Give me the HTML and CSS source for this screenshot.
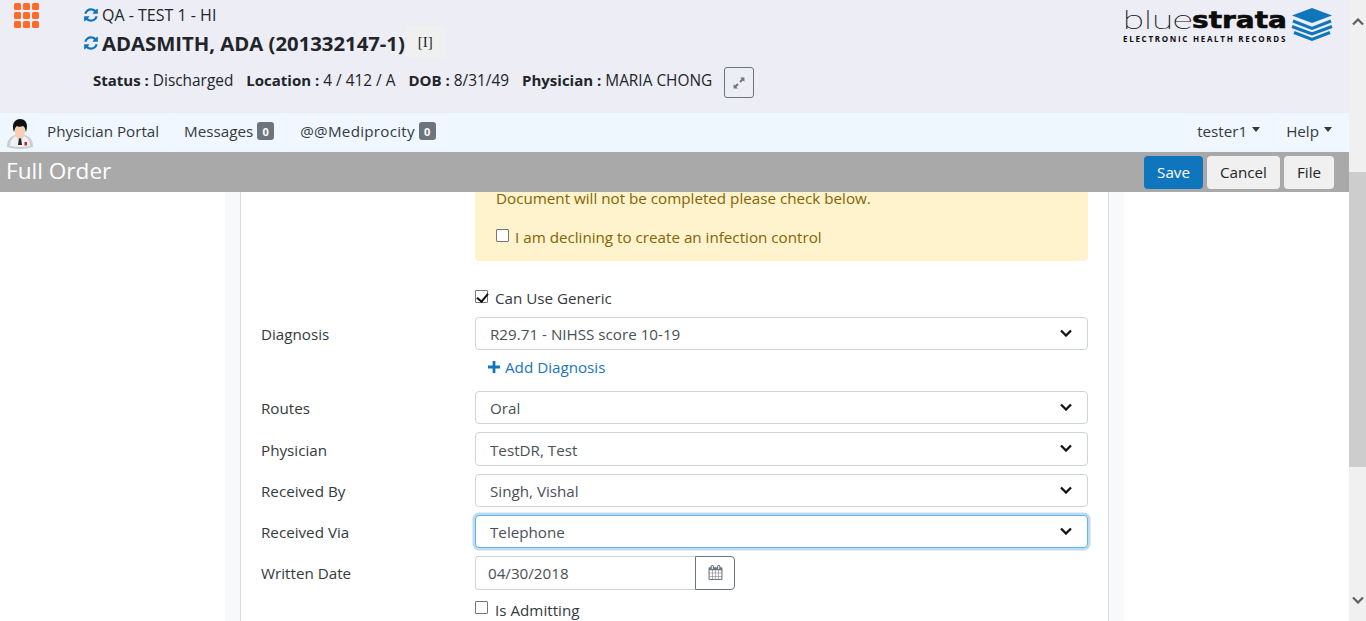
FILE: index.html
```html
<!doctype html>
<html lang="en">
<head>
    <meta charset="utf-8">
    <title>Full Order</title>
    <link rel="stylesheet" href="styles.css">
</head>
<body>
<div class="page">
    <div class="main">
        <header class="header">
            <div class="apps">
                <i></i><i></i><i></i><i></i><i></i><i></i><i></i><i></i><i></i>
            </div>
            <div class="patient">
                <div class="facility">
                    <svg class="refresh" viewBox="0 0 1792 1792"><path d="M1639 1056q0 5-1 7-64 268-268 434.5t-478 166.5q-146 0-282.5-55t-243.5-157l-129 129q-19 19-45 19t-45-19-19-45v-448q0-26 19-45t45-19h448q26 0 45 19t19 45-19 45l-137 137q71 66 161 102t187 36q134 0 250-65t186-179q11-17 53-117 8-23 30-23h192q13 0 22.5 9.5t9.5 22.5zm25-800v448q0 26-19 45t-45 19h-448q-26 0-45-19t-19-45 19-45l138-138q-148-137-349-137-134 0-250 65t-186 179q-11 17-53 117-8 23-30 23h-199q-13 0-22.5-9.5t-9.5-22.5v-7q65-268 270-434.5t480-166.5q146 0 284 55.5t245 156.5l130-129q19-19 45-19t45 19 19 45z"/></svg>
                    QA - TEST 1 - HI
                </div>
                <div class="name-row">
                    <svg class="refresh" viewBox="0 0 1792 1792"><path d="M1639 1056q0 5-1 7-64 268-268 434.5t-478 166.5q-146 0-282.5-55t-243.5-157l-129 129q-19 19-45 19t-45-19-19-45v-448q0-26 19-45t45-19h448q26 0 45 19t19 45-19 45l-137 137q71 66 161 102t187 36q134 0 250-65t186-179q11-17 53-117 8-23 30-23h192q13 0 22.5 9.5t9.5 22.5zm25-800v448q0 26-19 45t-45 19h-448q-26 0-45-19t-19-45 19-45l138-138q-148-137-349-137-134 0-250 65t-186 179q-11 17-53 117-8 23-30 23h-199q-13 0-22.5-9.5t-9.5-22.5v-7q65-268 270-434.5t480-166.5q146 0 284 55.5t245 156.5l130-129q19-19 45-19t45 19 19 45z"/></svg>
                    <span class="name">ADASMITH, ADA (201332147-1)</span>
                    <span class="flag">[I]</span>
                </div>
                <div class="info">
                    <span><b>Status :</b> Discharged</span>
                    <span><b>Location :</b> 4 / 412 / A</span>
                    <span><b>DOB :</b> 8/31/49</span>
                    <span><b>Physician :</b> MARIA CHONG</span>
                    <button class="expand" type="button">
                        <svg viewBox="0 0 14 14"><path d="M8.2 1.6h4.2v4.2l-1.4-1.4-2.3 2.3-1.4-1.4 2.3-2.3zM5.8 12.4H1.6V8.2L3 9.6l2.3-2.3 1.4 1.4-2.3 2.3z"/></svg>
                    </button>
                </div>
            </div>
            <div class="logo">
                <div class="logo-text">
                    <div class="logo-word"><span class="blue">blue</span><span class="strata">strata</span></div>
                    <div class="logo-sub">ELECTRONIC HEALTH RECORDS</div>
                </div>
                <svg class="logo-mark" viewBox="0 0 46 34">
                    <path fill="#0f75bc" d="M23 0l20 7.500-20 7.500-20-7.500z"/>
                    <path fill="none" stroke="#0f75bc" stroke-width="3" d="M4 13l19 7.500 19-7.500"/>
                    <path fill="none" stroke="#0f75bc" stroke-width="3" d="M3 18.500l20 7.500 20-7.500"/>
                    <path fill="none" stroke="#0f75bc" stroke-width="3" d="M5 24.500l18 7 18-7"/>
                </svg>
            </div>
        </header>

        <nav class="nav">
            <svg class="avatar" viewBox="0 0 26 30">
                <path fill="#c9ced2" d="M0 28c0-7 3-10 8-12h10c5 2 8 5 8 12q-13 4-26 0z"/>
                <path fill="#eef0f1" d="M3 27c0-5 2-8 6-10l4 5 4-5c4 2 6 5 6 10q-10 2-20 0z"/>
                <path fill="#222" d="M12 19h2l1 7h-4z"/>
                <rect fill="#d0202a" x="17.500" y="23" width="2.500" height="3.500"/>
                <ellipse fill="#f8cfb0" cx="13" cy="12" rx="5" ry="7.500"/>
                <path fill="#111" d="M7 13C4 5 8 0 13 0c5 0 9 4 6 13-1-3-1-5-3-6-2 1-5 1-6 0-2 1-2 3-3 6z"/>
            </svg>
            <a class="nav-item nav-portal">Physician Portal</a>
            <a class="nav-item">Messages <span class="badge">0</span></a>
            <a class="nav-item nav-medi">@@Mediprocity <span class="badge">0</span></a>
            <a class="nav-item nav-user">tester1<i class="caret"></i></a>
            <a class="nav-item">Help<i class="caret"></i></a>
        </nav>

        <div class="titlebar">
            <h1>Full Order</h1>
            <button class="btn btn-primary" type="button">Save</button>
            <button class="btn" type="button">Cancel</button>
            <button class="btn" type="button">File</button>
        </div>

        <div class="content">
            <div class="card">
                <div class="form">
                    <div class="alert">
                        <p>Document will not be completed please check below.</p>
                        <label class="check-row"><input type="checkbox"> I am declining to create an infection control</label>
                    </div>

                    <label class="check-row generic"><input type="checkbox" checked> Can Use Generic</label>

                    <div class="row row-diagnosis">
                        <label>Diagnosis</label>
                        <div class="select-wrap">
                            <select><option>R29.71 - NIHSS score 10-19</option></select>
                            <svg class="chevron" viewBox="0 0 12 8"><path d="M1 1.500l5 5 5-5"/></svg>
                        </div>
                    </div>
                    <a class="add-link"><svg viewBox="0 0 12 12"><path d="M4.600 0h2.800v4.600H12v2.800H7.400V12H4.600V7.400H0V4.600h4.600z"/></svg> Add Diagnosis</a>

                    <div class="row row-first">
                        <label>Routes</label>
                        <div class="select-wrap">
                            <select><option>Oral</option></select>
                            <svg class="chevron" viewBox="0 0 12 8"><path d="M1 1.500l5 5 5-5"/></svg>
                        </div>
                    </div>
                    <div class="row">
                        <label>Physician</label>
                        <div class="select-wrap">
                            <select><option>TestDR, Test</option></select>
                            <svg class="chevron" viewBox="0 0 12 8"><path d="M1 1.500l5 5 5-5"/></svg>
                        </div>
                    </div>
                    <div class="row">
                        <label>Received By</label>
                        <div class="select-wrap">
                            <select><option>Singh, Vishal</option></select>
                            <svg class="chevron" viewBox="0 0 12 8"><path d="M1 1.500l5 5 5-5"/></svg>
                        </div>
                    </div>
                    <div class="row">
                        <label>Received Via</label>
                        <div class="select-wrap">
                            <select class="focused"><option>Telephone</option></select>
                            <svg class="chevron" viewBox="0 0 12 8"><path d="M1 1.500l5 5 5-5"/></svg>
                        </div>
                    </div>
                    <div class="row">
                        <label>Written Date</label>
                        <div class="date-group">
                            <input type="text" value="04/30/2018">
                            <button type="button">
                                <svg viewBox="0 0 1792 1792"><path d="M192 1664h288v-288h-288v288zm352 0h320v-288h-320v288zm-352-352h288v-320h-288v320zm352 0h320v-320h-320v320zm-352-384h288v-288h-288v288zm736 736h320v-288h-320v288zm-384-736h320v-288h-320v288zm768 736h288v-288h-288v288zm-384-352h320v-320h-320v320zm-352-864v-288q0-13-9.500-22.500t-22.500-9.500h-64q-13 0-22.500 9.500t-9.500 22.500v288q0 13 9.500 22.500t22.500 9.500h64q13 0 22.500-9.500t9.500-22.500zm736 864h288v-320h-288v320zm-384-384h320v-288h-320v288zm384 0h288v-288h-288v288zm32-480v-288q0-13-9.500-22.500t-22.500-9.500h-64q-13 0-22.500 9.500t-9.500 22.500v288q0 13 9.500 22.500t22.500 9.500h64q13 0 22.500-9.500t9.500-22.500zm384-64v1280q0 52-38 90t-90 38h-1408q-52 0-90-38t-38-90v-1280q0-52 38-90t90-38h128v-96q0-66 47-113t113-47h64q66 0 113 47t47 113v96h384v-96q0-66 47-113t113-47h64q66 0 113 47t47 113v96h128q52 0 90 38t38 90z"/></svg>
                            </button>
                        </div>
                    </div>
                    <label class="check-row admitting"><input type="checkbox"> Is Admitting</label>
                </div>
            </div>
        </div>
    </div>

    <div class="scrollbar">
        <svg class="arrow" viewBox="0 0 12 8"><path d="M1 6.500l5-5 5 5"/></svg>
        <div class="thumb"></div>
        <svg class="arrow arrow-down" viewBox="0 0 12 8"><path d="M1 1.500l5 5 5-5"/></svg>
    </div>
</div>
</body>
</html>
```

FILE: styles.css
```css
* { box-sizing: border-box; }

html, body { height: 100%; margin: 0; overflow: hidden; }

body {
    font-family: "Open Sans", "Noto Sans", sans-serif;
    font-size: 15.2px;
    color: #212529;
    background: #fff;
}

.page { display: flex; height: 621px; }
.main { width: 1349px; display: flex; flex-direction: column; }

/* scrollbar */
.scrollbar {
    width: 17px;
    background: #f0f0f0;
    display: flex;
    flex-direction: column;
    align-items: center;
}
.arrow { width: 12px; height: 8px; margin-top: 18px; flex: none; fill: none; stroke: #606060; stroke-width: 2.200; }
.arrow-down { margin-top: 129px; }
.thumb { width: 17px; height: 295px; margin-top: 146px; flex: none; background: #cdcdcd; }

/* header */
.header { height: 113px; background: #ecedf5; display: flex; position: relative; }

.apps {
    width: 26px;
    height: 26px;
    margin: 3px 0 0 14px;
    display: grid;
    grid-template-columns: repeat(3, 7px);
    grid-auto-rows: 7px;
    gap: 2px;
}
.apps i { background: #ff6a28; border-radius: 1.500px; }

.patient { margin-left: 43px; padding-top: 6px; }
.refresh { width: 16px; height: 16px; fill: #0f75bc; flex: none; }

.facility { display: flex; align-items: center; gap: 3px; height: 18px; font-size: 16px; }
.name-row { display: flex; align-items: center; gap: 3px; margin-top: 2px; height: 32px; }
.name-row .refresh { margin-top: 2px; }
.name { font-size: 20.300px; font-weight: 700; color: #212529; padding-top: 1px; }
.flag {
    width: 39px;
    height: 32px;
    margin-left: -2px;
    background: #f0f0f0;
    border-radius: 3px;
    font-family: "Liberation Serif", serif;
    font-size: 15px;
    display: flex;
    align-items: center;
    justify-content: center;
}

.info { display: flex; align-items: center; margin: 9px 0 0 10px; height: 31px; gap: 13px; font-size: 15.400px; }
.info span { padding-bottom: 5px; }
.info b { font-size: 15px; }
.expand {
    width: 30px;
    height: 31px;
    padding: 0;
    margin-left: -1px;
    background: transparent;
    border: 1px solid #6c757d;
    border-radius: 3px;
    display: flex;
    align-items: center;
    justify-content: center;
}
.expand svg { width: 14px; height: 14px; fill: #6c757d; }

.logo { position: absolute; top: 8px; right: 14px; display: flex; gap: 1px; }
.logo-text { width: 165px; color: #0c0c0c; }
.logo-word { display: flex; height: 22px; line-height: 24px; white-space: nowrap; }
.blue {
    width: 69px;
    font-family: "Roboto", sans-serif;
    font-size: 26px;
    font-weight: 100;
    transform: scaleX(1.480);
    transform-origin: left;
}
.strata {
    font-family: "DejaVu Sans", sans-serif;
    font-size: 23.500px;
    font-weight: 700;
    -webkit-text-stroke: 0.600px #0c0c0c;
    transform: scaleX(1.190);
    transform-origin: left;
}
.logo-sub { font-size: 8px; font-weight: 700; letter-spacing: 1.700px; margin-top: 3px; white-space: nowrap; }
.logo-mark { width: 46px; height: 34px; }

/* nav */
.nav { height: 39px; background: #eef6fe; display: flex; padding: 2px 5px 0 7px; gap: 2px; }
.avatar { width: 26px; height: 30px; margin: 4px -1px 0 0; flex: none; }
.nav-item {
    height: 32px;
    padding: 0 12px;
    background: #f0f7ff;
    border-radius: 3px;
    display: flex;
    align-items: center;
    gap: 4px;
    color: #343a40;
}
.nav-portal { padding-left: 13px; padding-right: 11px; }
.nav-medi { letter-spacing: 0.250px; }
.nav-user { margin-left: auto; }
.badge {
    background: #6c757d;
    color: #fff;
    font-size: 11px;
    font-weight: 700;
    border-radius: 3px;
    width: 17px;
    height: 18px;
    display: flex;
    align-items: center;
    justify-content: center;
}
.caret {
    width: 0;
    height: 0;
    margin-left: 1px;
    margin-bottom: 3px;
    border-top: 5px solid #343a40;
    border-left: 4.500px solid transparent;
    border-right: 4.500px solid transparent;
}

/* title bar */
.titlebar {
    height: 40px;
    background: #a9a9a9;
    display: flex;
    align-items: center;
    padding: 0 15px 0 6px;
    gap: 4px;
}
.titlebar h1 { margin: 0 auto 3px 0; font-size: 22.600px; font-weight: 400; color: #fff; }
.btn {
    height: 33px;
    padding: 0 13px;
    font: inherit;
    color: #212529;
    background: #f0f0f0;
    border: 0;
    border-radius: 4px;
}
.btn-primary { background: #0f75bc; color: #fff; }

/* content */
.content {
    flex: 1;
    min-height: 0;
    overflow: hidden;
    padding: 0 225px;
}
.card {
    width: 899px;
    height: 100%;
    background: #f8f9fa;
    padding: 0 15px;
}
.form {
    height: 100%;
    overflow: hidden;
    background: #fff;
    border-left: 1px solid #dcdcdc;
    border-right: 1px solid #dcdcdc;
    padding-left: 234px;
    color: #343a40;
}

.alert {
    width: 613px;
    height: 69px;
    padding: 0 21px;
    background: #fff3cd;
    color: #856404;
    border-radius: 0 0 4px 4px;
}
.alert p { margin: 0; height: 30px; line-height: 12px; }
.alert .check-row { height: 30px; gap: 6px; }

.check-row { display: flex; align-items: center; gap: 7px; }
.check-row input {
    appearance: none;
    width: 13px;
    height: 13px;
    margin: 0;
    position: relative;
    top: -2px;
    background: #fff;
    border: 1px solid #767676;
    border-radius: 1px;
    flex: none;
}
.check-row input:checked::after {
    content: "";
    position: absolute;
    left: 3px;
    top: 0;
    width: 5px;
    height: 9px;
    border: solid #111;
    border-width: 0 2px 2px 0;
    transform: rotate(40deg);
}
.generic { margin-top: 27px; height: 20px; }
.admitting { margin-top: 10px; height: 20px; }

.row { display: flex; margin-left: -234px; margin-top: 8px; height: 33.330px; align-items: center; }
.row label { width: 234px; padding: 1px 0 0 20px; flex: none; }
.row-diagnosis { margin-top: 9px; }
.row-first { margin-top: 12.700px; }

.select-wrap { width: 613px; height: 100%; position: relative; }
.select-wrap select {
    appearance: none;
    width: 100%;
    height: 100%;
    padding: 1px 14px 0;
    font: inherit;
    color: #495057;
    background: #fff;
    border: 1px solid #ced4da;
    border-radius: 4px;
}
.select-wrap select.focused {
    border-color: #63b2ee;
    box-shadow: 0 0 0 2.500px #bedcf1;
}
.chevron {
    position: absolute;
    right: 16px;
    top: 12px;
    width: 12px;
    height: 8px;
    fill: none;
    stroke: #111;
    stroke-width: 2.300;
}

.add-link {
    display: flex;
    align-items: center;
    gap: 5px;
    height: 23px;
    margin: 5px 0 0 13px;
    color: #1b75bb;
}
.add-link svg { width: 12px; height: 12px; fill: #0f75bc; }

.date-group { display: flex; width: 260px; height: 100%; }
.date-group input {
    width: 220px;
    height: 100%;
    padding: 1px 12px 0;
    font: inherit;
    color: #495057;
    border: 1px solid #ced4da;
    border-right: 0;
    border-radius: 4px 0 0 4px;
}
.date-group button {
    width: 40px;
    height: 100%;
    padding: 0;
    background: #fff;
    border: 1px solid #6c757d;
    border-radius: 0 4px 4px 0;
    display: flex;
    align-items: center;
    justify-content: center;
}
.date-group svg { width: 15px; height: 15px; fill: #6c757d; }
```
